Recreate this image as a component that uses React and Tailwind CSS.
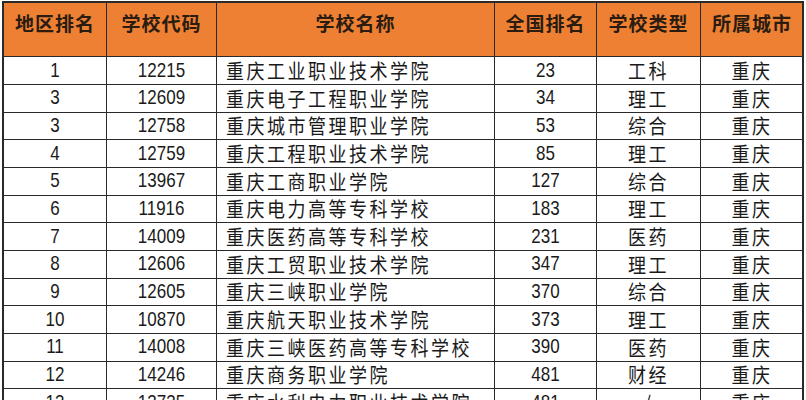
import React from "react";

const rows = [
  ["1", "12215", "重庆工业职业技术学院", "23", "工科", "重庆"],
  ["3", "12609", "重庆电子工程职业学院", "34", "理工", "重庆"],
  ["3", "12758", "重庆城市管理职业学院", "53", "综合", "重庆"],
  ["4", "12759", "重庆工程职业技术学院", "85", "理工", "重庆"],
  ["5", "13967", "重庆工商职业学院", "127", "综合", "重庆"],
  ["6", "11916", "重庆电力高等专科学校", "183", "理工", "重庆"],
  ["7", "14009", "重庆医药高等专科学校", "231", "医药", "重庆"],
  ["8", "12606", "重庆工贸职业技术学院", "347", "理工", "重庆"],
  ["9", "12605", "重庆三峡职业学院", "370", "综合", "重庆"],
  ["10", "10870", "重庆航天职业技术学院", "373", "理工", "重庆"],
  ["11", "14008", "重庆三峡医药高等专科学校", "390", "医药", "重庆"],
  ["12", "14246", "重庆商务职业学院", "481", "财经", "重庆"],
  ["13", "13735", "重庆水利电力职业技术学院", "481", "/", "重庆"],
];

const headers = ["地区排名", "学校代码", "学校名称", "全国排名", "学校类型", "所属城市"];

const gridCols = "grid grid-cols-[103px_110px_278px_102px_104px_102px]";

export default function App() {
  return (
    <div className="w-[806px] h-[400px] overflow-hidden bg-white">
      <div className="ml-[2px] mt-[1px] w-[802px] border-l-2 border-t-2 border-r-2 border-[#2a2a2a] font-['Liberation_Sans','Noto_Sans_CJK_SC',sans-serif] text-[#1a1a1a]">
        <div className={`${gridCols} h-[54px] bg-[#ee8033]`}>
          {headers.map((h, i) => (
            <div
              key={i}
              className={`flex justify-center pt-[6px] text-[19px] font-bold tracking-[1px] text-[#2a1c10] font-['Noto_Sans_CJK_SC',sans-serif] border-b border-[#2a2a2a] ${i < 5 ? "border-r" : ""}`}
            >
              {h}
            </div>
          ))}
        </div>
        {rows.map((r, ri) => (
          <div key={ri} className={`${gridCols} h-[27.67px]`}>
            {r.map((c, ci) => (
              <div
                key={ci}
                className={`flex items-center border-b border-[#2a2a2a] ${ci < 5 ? "border-r" : ""} ${ci === 2 ? "justify-start pl-[9px]" : "justify-center"} ${/^[0-9]+$/.test(c) ? "text-[17px] font-['Liberation_Sans',sans-serif]" : "text-[18px] tracking-[2.5px] font-['Noto_Sans_CJK_SC',sans-serif]"}`}
              >
                <span className="inline-block scale-y-[1.15]">{c}</span>
              </div>
            ))}
          </div>
        ))}
      </div>
    </div>
  );
}
